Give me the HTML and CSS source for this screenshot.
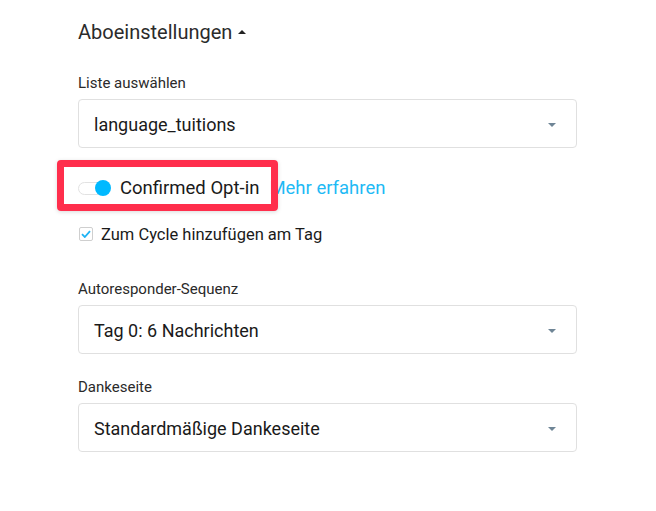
FILE: index.html
```html
<!DOCTYPE html>
<html lang="de">
<head>
    <meta charset="UTF-8">
    <meta name="viewport" content="width=device-width, initial-scale=1.0">
    <title>Aboeinstellungen</title>
    <link rel="stylesheet" href="styles.css">
</head>
<body>
    <div class="panel">
        <h2 class="title">Aboeinstellungen <span class="caret"></span></h2>

        <div class="field first">
            <label class="label">Liste auswählen</label>
            <div class="select">
                <span>language_tuitions</span>
                <span class="arrow"></span>
            </div>
        </div>

        <div class="toggle-row">
            <span class="switch"><span class="knob"></span></span>
            <span class="toggle-text">Confirmed Opt-in</span>
            <a class="more" href="#">Mehr erfahren</a>
            <div class="highlight"></div>
        </div>

        <div class="check-row">
            <span class="checkbox">
                <svg width="10" height="8" viewBox="0 0 10 8"><path d="M1 4.2 L3.8 7 L9 1.2" fill="none" stroke="#1fb3f4" stroke-width="1.8"/></svg>
            </span>
            <span>Zum Cycle hinzufügen am Tag</span>
        </div>

        <div class="field second">
            <label class="label">Autoresponder-Sequenz</label>
            <div class="select">
                <span>Tag 0: 6 Nachrichten</span>
                <span class="arrow"></span>
            </div>
        </div>

        <div class="field third">
            <label class="label">Dankeseite</label>
            <div class="select">
                <span>Standardmäßige Dankeseite</span>
                <span class="arrow"></span>
            </div>
        </div>
    </div>
</body>
</html>
```

FILE: styles.css
```css
body {
    margin: 0;
    font-family: Roboto, "Liberation Sans", Arial, sans-serif;
    background-color: #fff;
    color: #1f1f1f;
}
.panel {
    width: 499px;
    padding: 20px 0 0 78px;
}
.title {
    margin: 0;
    font-size: 20px;
    line-height: 24px;
    font-weight: 400;
    color: #2b2b2b;
    display: flex;
    align-items: center;
}
.caret {
    margin-left: 6px;
    width: 0;
    height: 0;
    border-left: 4px solid transparent;
    border-right: 4px solid transparent;
    border-bottom: 4px solid #222;
}
.field.first {
    margin-top: 29px;
}
.field.second {
    margin-top: 35px;
}
.field.third {
    margin-top: 23px;
}
.label {
    display: block;
    font-size: 15px;
    line-height: 20px;
    color: #2a2a2a;
    margin-bottom: 6px;
}
.select {
    height: 47px;
    border: 1px solid #e0e0e0;
    border-radius: 4px;
    display: flex;
    align-items: center;
    justify-content: space-between;
    padding: 2px 20px 0 15px;
    box-sizing: content-box;
    font-size: 18px;
    color: #1a1a1a;
}
.select {
    height: 45px;
}
.arrow {
    width: 0;
    height: 0;
    border-left: 4px solid transparent;
    border-right: 4px solid transparent;
    border-top: 4px solid #6f8596;
}
.toggle-row {
    position: relative;
    margin-top: 26px;
    height: 28px;
    display: flex;
    align-items: center;
    font-size: 18.5px;
}
.switch {
    position: relative;
    width: 30px;
    height: 11px;
    border: 1px solid #e2e2e2;
    border-radius: 7px;
    background-color: #fff;
    margin-right: 10px;
}
.knob {
    position: absolute;
    right: -2px;
    top: -3px;
    width: 16px;
    height: 16px;
    border-radius: 50%;
    background-color: #00b9ff;
}
.toggle-text {
    color: #1a1a1a;
}
.more {
    margin-left: 10px;
    color: #1fbaf5;
    text-decoration: none;
}
.highlight {
    position: absolute;
    left: -21px;
    top: -14px;
    width: 207px;
    height: 37px;
    border: 7px solid #ff2e4c;
    border-radius: 4px;
    box-shadow: 0 1px 4px rgba(0, 0, 0, 0.15);
}
.check-row {
    margin-top: 22px;
    height: 20px;
    display: flex;
    align-items: center;
    font-size: 16.5px;
    color: #1a1a1a;
}
.checkbox {
    width: 12px;
    height: 12px;
    border: 1px solid #cfcfcf;
    border-radius: 2px;
    margin: 0 8px 0 1px;
    display: flex;
    align-items: center;
    justify-content: center;
}
```
